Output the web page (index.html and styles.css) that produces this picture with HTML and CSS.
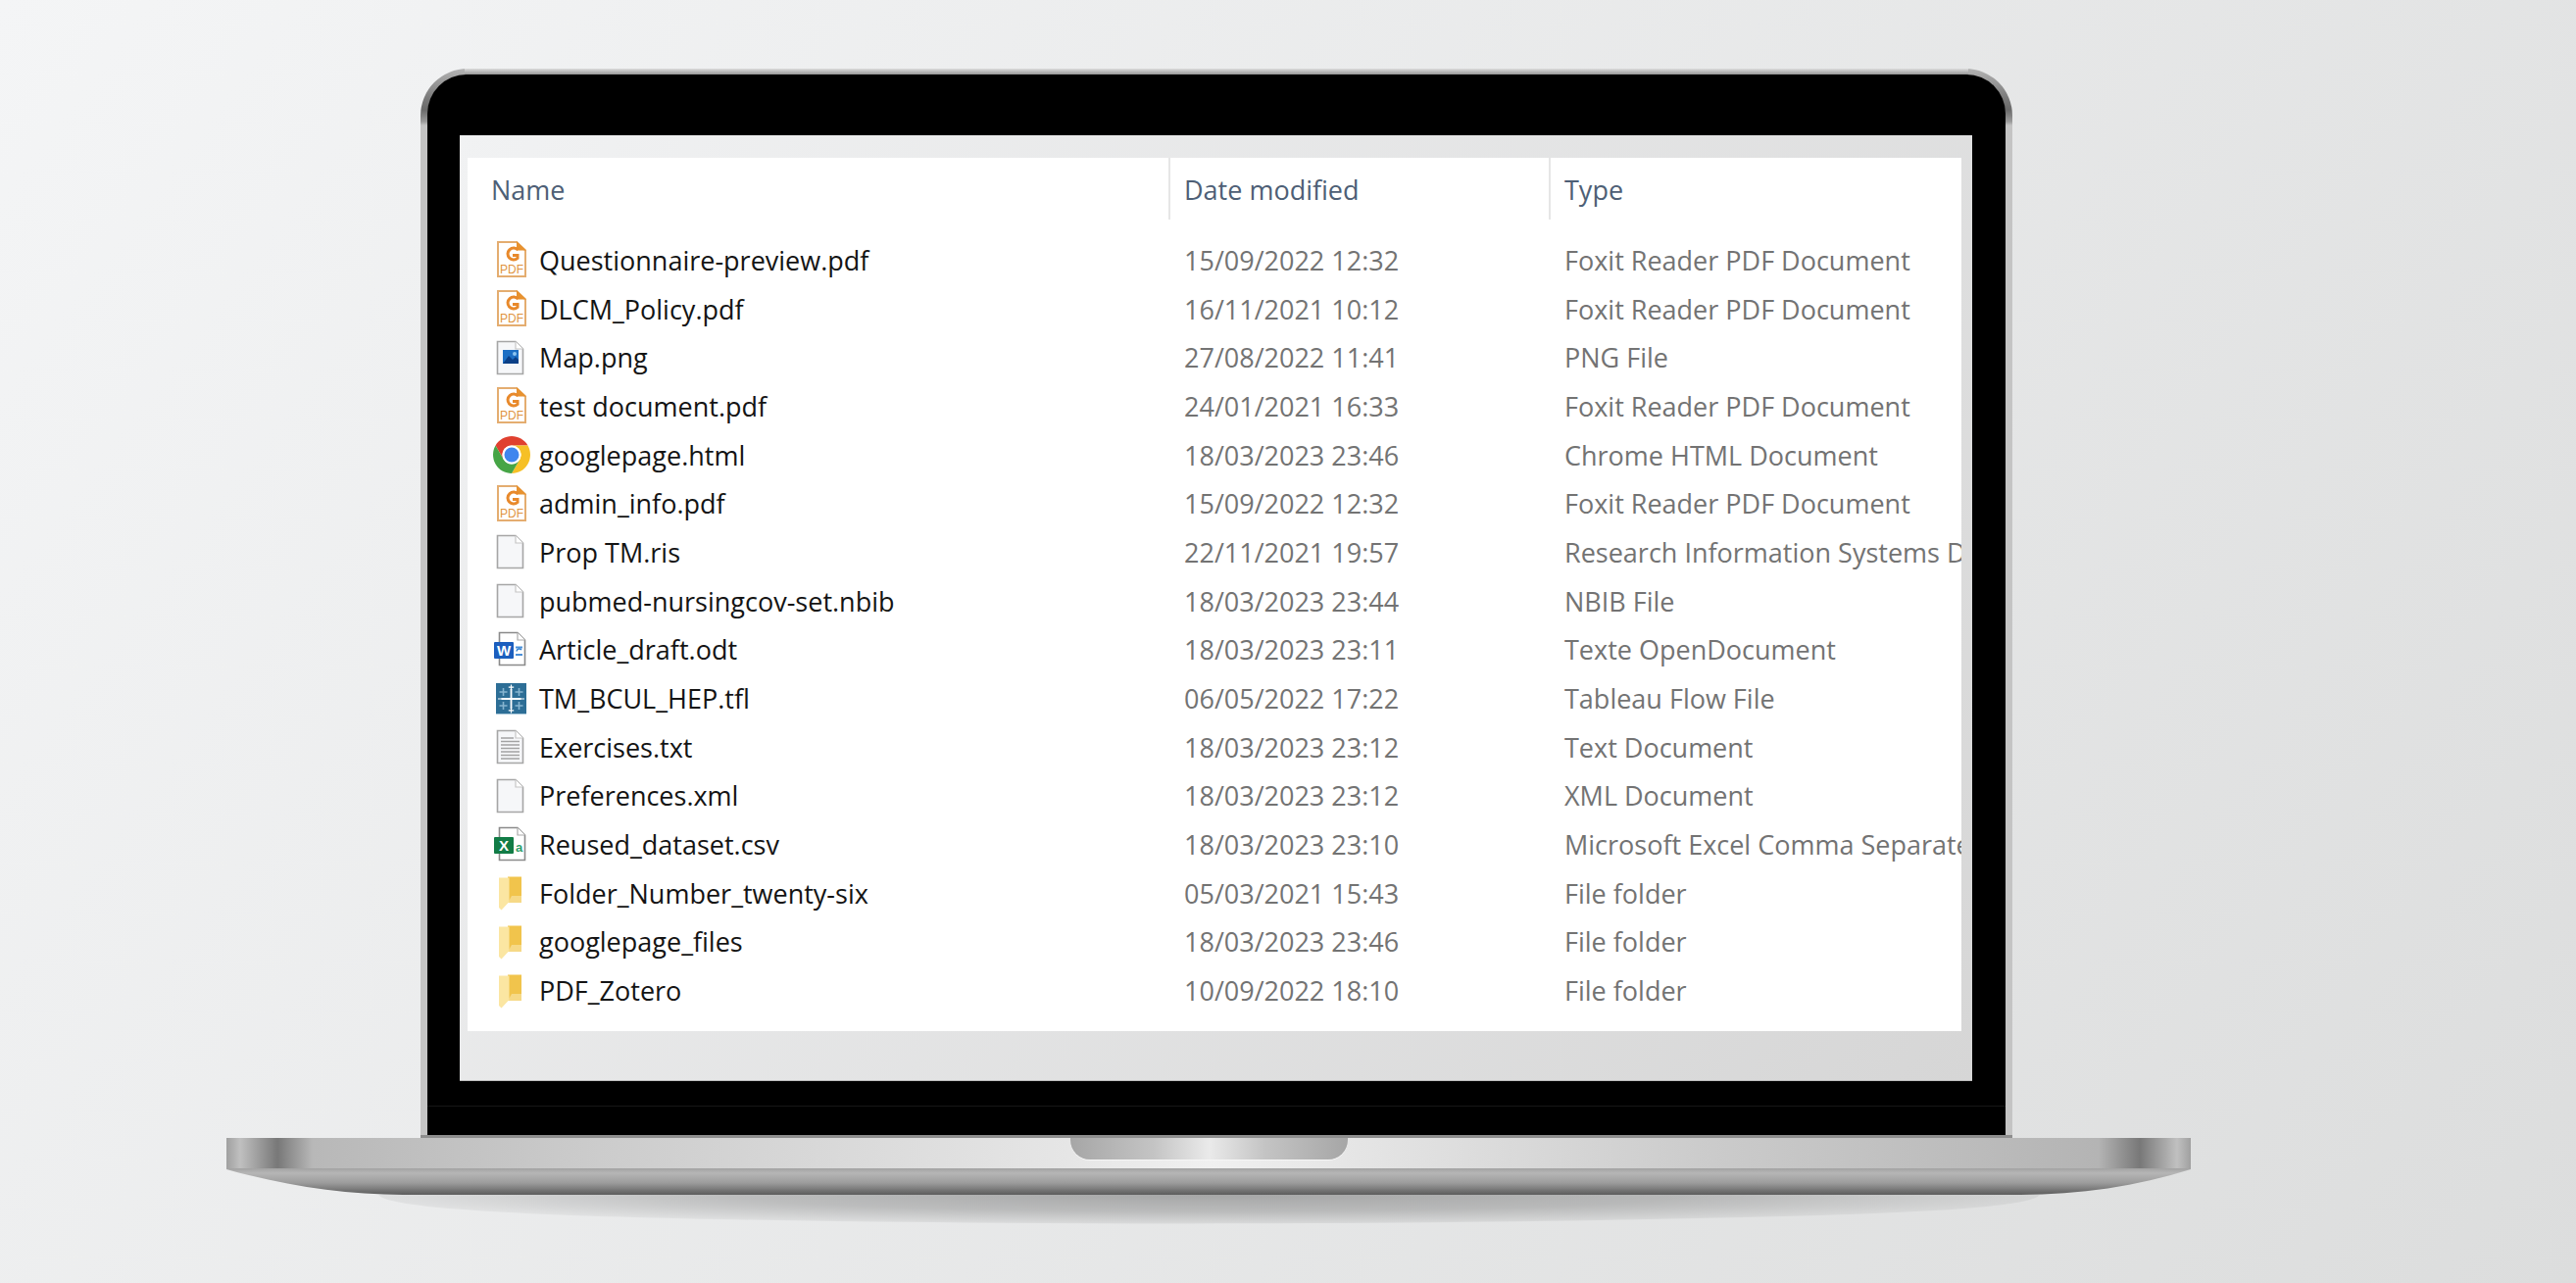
FILE: index.html
```html
<!DOCTYPE html>
<html lang="en">
  <head>
    <meta charset="utf-8">
    <title>Laptop file list</title>
    <link rel="stylesheet" href="styles.css">
  </head>
  <body>
    <!-- Icons used by the file rows -->
    <svg class="sprite" xmlns="http://www.w3.org/2000/svg">
      <symbol id="i-pdf" viewBox="0 0 44 44">
        <path d="M8 4L27 4L36 12.500V39H8Z" fill="#fff" stroke="#e4ad70" stroke-width="2"/>
        <path d="M27 3L37 12.500H27Z" fill="#e8922f"/>
        <path d="M28.500 12A6 6 0 1 0 28 20.500V17.500H23" fill="none" stroke="#e8892b" stroke-width="3"/>
        <text class="pdf-label" x="22" y="35.500" text-anchor="middle">PDF</text>
      </symbol>
      <symbol id="i-blank" viewBox="0 0 44 44">
        <path d="M7.500 5.500H26L33.500 13V38.500H7.500Z" fill="#f6f7f9" stroke="#a6a6a6" stroke-width="1.600"/>
        <path d="M26 5.500V13H33.500" fill="#fff" stroke="#c6c6c6" stroke-width="1.200"/>
      </symbol>
      <symbol id="i-image" viewBox="0 0 44 44">
        <use href="#i-blank"/>
        <rect x="13" y="14" width="16" height="14" fill="#1d6fc4"/>
        <path d="M13 28L19 20L23 24L26 21L29 24V28Z" fill="#0b3f86"/>
        <circle cx="25" cy="18" r="2" fill="#8cc4f0"/>
      </symbol>
      <symbol id="i-text" viewBox="0 0 44 44">
        <use href="#i-blank"/>
        <path d="M11 13H24M11 16.500H30M11 20H30M11 23.500H30M11 27H30M11 30.500H30M11 34H30" stroke="#a3a3a3" stroke-width="1.600"/>
      </symbol>
      <symbol id="i-word" viewBox="0 0 44 44">
        <path d="M9.500 4.500H28L35.500 12V37.500H9.500Z" fill="#fff" stroke="#8a8a8a" stroke-width="1.600"/>
        <path d="M28 4.500V12H35.500" fill="#fff" stroke="#aaa" stroke-width="1.200"/>
        <path d="M26 19.500H33M26 27H33" stroke="#4a90d9" stroke-width="2"/>
        <path d="M27 23.500A2.800 2.800 0 0 1 32 22" fill="none" stroke="#2f7fd0" stroke-width="1.500"/>
        <rect x="4" y="14" width="20" height="17" rx="1" fill="#1b5ebe"/>
        <text class="badge-label" x="14" y="27.500" text-anchor="middle">W</text>
      </symbol>
      <symbol id="i-excel" viewBox="0 0 44 44">
        <path d="M9.500 4.500H28L35.500 12V37.500H9.500Z" fill="#fff" stroke="#8a8a8a" stroke-width="1.600"/>
        <path d="M28 4.500V12H35.500" fill="#fff" stroke="#aaa" stroke-width="1.200"/>
        <text class="sheet-label" x="29.500" y="29" text-anchor="middle">a</text>
        <rect x="4" y="14" width="20" height="17" rx="1" fill="#127c46"/>
        <text class="badge-label" x="14" y="27.500" text-anchor="middle">X</text>
      </symbol>
      <symbol id="i-tableau" viewBox="0 0 44 44">
        <rect x="6" y="6" width="31" height="31" fill="#2d6e96"/>
        <path d="M6 37.500H37" stroke="#a9c8da" stroke-width="1"/>
        <path d="M21.500 12V32M11.500 22H31.500" stroke="#fff" stroke-width="1.800"/>
        <path d="M21.500 7.500V13M18.800 10.200H24.200M21.500 31V36.500M18.800 33.800H24.200M8 22H13M30 22H35" stroke="#fff" stroke-width="1.200"/>
        <path d="M13.500 11V19M9.500 15H17.500M29.500 11V19M25.500 15H33.500M13.500 25V33M9.500 29H17.500M29.500 25V33M25.500 29H33.500" stroke="#86b4cf" stroke-width="1.600"/>
      </symbol>
      <symbol id="i-chrome" viewBox="0 0 44 44">
        <path d="M5.550 12.500A19 19 0 0 1 38.450 12.500H22A9.500 9.500 0 0 0 13.770 26.750Z" fill="#e0402f"/>
        <path d="M5.550 12.500A19 19 0 0 1 38.450 12.500H22A9.500 9.500 0 0 0 13.770 26.750Z" fill="#f6c026" transform="rotate(120 22 22)"/>
        <path d="M5.550 12.500A19 19 0 0 1 38.450 12.500H22A9.500 9.500 0 0 0 13.770 26.750Z" fill="#46a546" transform="rotate(240 22 22)"/>
        <circle cx="22" cy="22" r="9.500" fill="#fff"/>
        <circle cx="22" cy="22" r="7.500" fill="#3f86ee"/>
      </symbol>
      <symbol id="i-folder" viewBox="0 0 44 44">
        <path d="M18 5.500H32V32H18Z" fill="#f1c44c"/>
        <path d="M22 25H32V32H18Z" fill="#f6d987"/>
        <path d="M9 6.500H19.500V31L11.500 39.500L9 37Z" fill="#fbe6a2"/>
      </symbol>
    </svg>

    <div class="laptop">
      <div class="lid">
        <div class="bezel">
          <div class="screen">
            <div class="explorer">
              <div class="file-head">
                <div class="head-name">Name</div>
                <div class="head-cell">Date modified</div>
                <div class="head-cell">Type</div>
              </div>

              <div class="file-row">
                <div class="file-name"><svg class="file-icon"><use href="#i-pdf"/></svg>Questionnaire-preview.pdf</div>
                <div class="file-meta">15/09/2022 12:32</div>
                <div class="file-meta">Foxit Reader PDF Document</div>
              </div>
              <div class="file-row">
                <div class="file-name"><svg class="file-icon"><use href="#i-pdf"/></svg>DLCM_Policy.pdf</div>
                <div class="file-meta">16/11/2021 10:12</div>
                <div class="file-meta">Foxit Reader PDF Document</div>
              </div>
              <div class="file-row">
                <div class="file-name"><svg class="file-icon"><use href="#i-image"/></svg>Map.png</div>
                <div class="file-meta">27/08/2022 11:41</div>
                <div class="file-meta">PNG File</div>
              </div>
              <div class="file-row">
                <div class="file-name"><svg class="file-icon"><use href="#i-pdf"/></svg>test document.pdf</div>
                <div class="file-meta">24/01/2021 16:33</div>
                <div class="file-meta">Foxit Reader PDF Document</div>
              </div>
              <div class="file-row">
                <div class="file-name"><svg class="file-icon"><use href="#i-chrome"/></svg>googlepage.html</div>
                <div class="file-meta">18/03/2023 23:46</div>
                <div class="file-meta">Chrome HTML Document</div>
              </div>
              <div class="file-row">
                <div class="file-name"><svg class="file-icon"><use href="#i-pdf"/></svg>admin_info.pdf</div>
                <div class="file-meta">15/09/2022 12:32</div>
                <div class="file-meta">Foxit Reader PDF Document</div>
              </div>
              <div class="file-row">
                <div class="file-name"><svg class="file-icon"><use href="#i-blank"/></svg>Prop TM.ris</div>
                <div class="file-meta">22/11/2021 19:57</div>
                <div class="file-meta">Research Information Systems Document</div>
              </div>
              <div class="file-row">
                <div class="file-name"><svg class="file-icon"><use href="#i-blank"/></svg>pubmed-nursingcov-set.nbib</div>
                <div class="file-meta">18/03/2023 23:44</div>
                <div class="file-meta">NBIB File</div>
              </div>
              <div class="file-row">
                <div class="file-name"><svg class="file-icon"><use href="#i-word"/></svg>Article_draft.odt</div>
                <div class="file-meta">18/03/2023 23:11</div>
                <div class="file-meta">Texte OpenDocument</div>
              </div>
              <div class="file-row">
                <div class="file-name"><svg class="file-icon"><use href="#i-tableau"/></svg>TM_BCUL_HEP.tfl</div>
                <div class="file-meta">06/05/2022 17:22</div>
                <div class="file-meta">Tableau Flow File</div>
              </div>
              <div class="file-row">
                <div class="file-name"><svg class="file-icon"><use href="#i-text"/></svg>Exercises.txt</div>
                <div class="file-meta">18/03/2023 23:12</div>
                <div class="file-meta">Text Document</div>
              </div>
              <div class="file-row">
                <div class="file-name"><svg class="file-icon"><use href="#i-blank"/></svg>Preferences.xml</div>
                <div class="file-meta">18/03/2023 23:12</div>
                <div class="file-meta">XML Document</div>
              </div>
              <div class="file-row">
                <div class="file-name"><svg class="file-icon"><use href="#i-excel"/></svg>Reused_dataset.csv</div>
                <div class="file-meta">18/03/2023 23:10</div>
                <div class="file-meta">Microsoft Excel Comma Separated Values File</div>
              </div>
              <div class="file-row">
                <div class="file-name"><svg class="file-icon"><use href="#i-folder"/></svg>Folder_Number_twenty-six</div>
                <div class="file-meta">05/03/2021 15:43</div>
                <div class="file-meta">File folder</div>
              </div>
              <div class="file-row">
                <div class="file-name"><svg class="file-icon"><use href="#i-folder"/></svg>googlepage_files</div>
                <div class="file-meta">18/03/2023 23:46</div>
                <div class="file-meta">File folder</div>
              </div>
              <div class="file-row">
                <div class="file-name"><svg class="file-icon"><use href="#i-folder"/></svg>PDF_Zotero</div>
                <div class="file-meta">10/09/2022 18:10</div>
                <div class="file-meta">File folder</div>
              </div>
            </div>
          </div>
        </div>
      </div>

      <div class="base-bar">
        <div class="notch"></div>
      </div>

      <svg class="base-lip" viewBox="0 0 2004 27" xmlns="http://www.w3.org/2000/svg">
        <defs>
          <linearGradient id="lip-fill" x1="0" y1="0" x2="0" y2="1">
            <stop offset="0" stop-color="#a2a2a2"/>
            <stop offset="0.18" stop-color="#b6b6b6"/>
            <stop offset="0.55" stop-color="#9c9c9c"/>
            <stop offset="1" stop-color="#5c5c5c"/>
          </linearGradient>
        </defs>
        <path d="M0 1C60 18 120 27 180 27H1830C1890 27 1950 18 2004 1V0H0Z" fill="url(#lip-fill)"/>
      </svg>

      <svg class="base-shadow" viewBox="0 0 2004 31" xmlns="http://www.w3.org/2000/svg">
        <defs>
          <radialGradient id="shadow-fill" gradientUnits="userSpaceOnUse" cx="0" cy="0" r="1" gradientTransform="translate(1002 0) scale(880 31)">
            <stop offset="0" stop-color="#000" stop-opacity="0.28"/>
            <stop offset="0.55" stop-color="#000" stop-opacity="0.19"/>
            <stop offset="1" stop-color="#000" stop-opacity="0.04"/>
          </radialGradient>
        </defs>
        <path d="M155 0C165 12 260 20 500 25C800 31 1200 31 1500 24C1700 20 1840 14 1850 0Z" fill="url(#shadow-fill)"/>
      </svg>
    </div>
  </body>
</html>
```

FILE: styles.css
```css
html,
body {
  height: 1309px;
  overflow: hidden;
}

body {
  margin: 0;
  padding: 70px 0 0 231px;
  box-sizing: border-box;
  background: linear-gradient(127deg, #f4f5f6, #dcdddd);
  font-family: "Open Sans", "Noto Sans", sans-serif;
}

.sprite {
  display: none;
}

.laptop {
  width: 2004px;
}

/* Lid: silver rim around the black bezel */
.lid {
  width: 1624px;
  margin-left: 198px;
  padding: 6px 7px 3px;
  box-sizing: border-box;
  border-radius: 48px 48px 0 0;
  background:
    linear-gradient(#dcdcdc, #8c8c8c) center top / calc(100% - 90px) 7px no-repeat,
    linear-gradient(#8e8e8e, #8e8e8e) center bottom / 100% 3px no-repeat,
    linear-gradient(#b4b4b4 0, #7a7a7a 30px, #6a6a6a 42px, #9a9a9a 54px, #c4c4c4 58px);
}

.bezel {
  height: 1082px;
  padding: 62px 34px 55px 33px;
  box-sizing: border-box;
  border-radius: 40px 40px 0 0;
  background:
    linear-gradient(#161616, #161616) 0 1052px / 100% 1px no-repeat,
    #000;
}

.screen {
  height: 965px;
  padding: 23px 11px 51px 8px;
  box-sizing: border-box;
  border-bottom: 1px solid #bdbdbd;
  background: linear-gradient(127deg, #f1f2f3, #d6d6d6);
}

.explorer {
  height: 891px;
  overflow: hidden;
  background-color: white;
}

.file-head,
.file-row {
  display: grid;
  grid-template-columns: 715px 388px 1fr;
  white-space: nowrap;
}

.file-head {
  grid-template-rows: 63px;
  margin-bottom: 16.5px;
  color: #4e5f76;
  font-size: 27px;
  line-height: 66px;
}

.head-name {
  padding-left: 24px;
}

.head-cell {
  padding-left: 14px;
  border-left: 2px solid #e6e6e6;
}

.file-row {
  height: 49.7px;
  align-items: center;
  font-size: 27px;
}

.file-name {
  display: flex;
  align-items: center;
  gap: 6px;
  padding-left: 23px;
  color: #141414;
}

.file-meta {
  padding-left: 16px;
  color: #737373;
}

.file-icon {
  width: 44px;
  height: 44px;
  flex: none;
}

.pdf-label {
  fill: #e0943f;
  font: 12px "Liberation Sans", sans-serif;
}

.badge-label {
  fill: white;
  font: bold 15px "Liberation Sans", sans-serif;
}

.sheet-label {
  fill: #2e9e6b;
  font: bold 13px "Liberation Sans", sans-serif;
}

/* Base of the laptop */
.base-bar {
  display: flex;
  justify-content: center;
  height: 31px;
  background: linear-gradient(90deg,
    #a0a0a0 0, #c0c0c0 14px, #787878 52px, #b8b8b8 88px, #cccccc 380px,
    #e6e6e6 860px, #f0f0f0 1002px, #e6e6e6 1140px, #cccccc 1500px,
    #b4b4b4 1910px, #787878 1952px, #c0c0c0 1990px, #a0a0a0 2004px);
}

.notch {
  width: 283px;
  height: 22px;
  border-radius: 0 0 20px 20px;
  background: linear-gradient(90deg, #a6a6a6, #c4c4c4 30%, #eaeaea 50%, #c4c4c4 70%, #a6a6a6);
  box-shadow: 0 1px 0 #f6f6f6;
}

.base-lip,
.base-shadow {
  display: block;
  width: 2004px;
}

.base-lip {
  height: 27px;
}

.base-shadow {
  height: 31px;
}
```
